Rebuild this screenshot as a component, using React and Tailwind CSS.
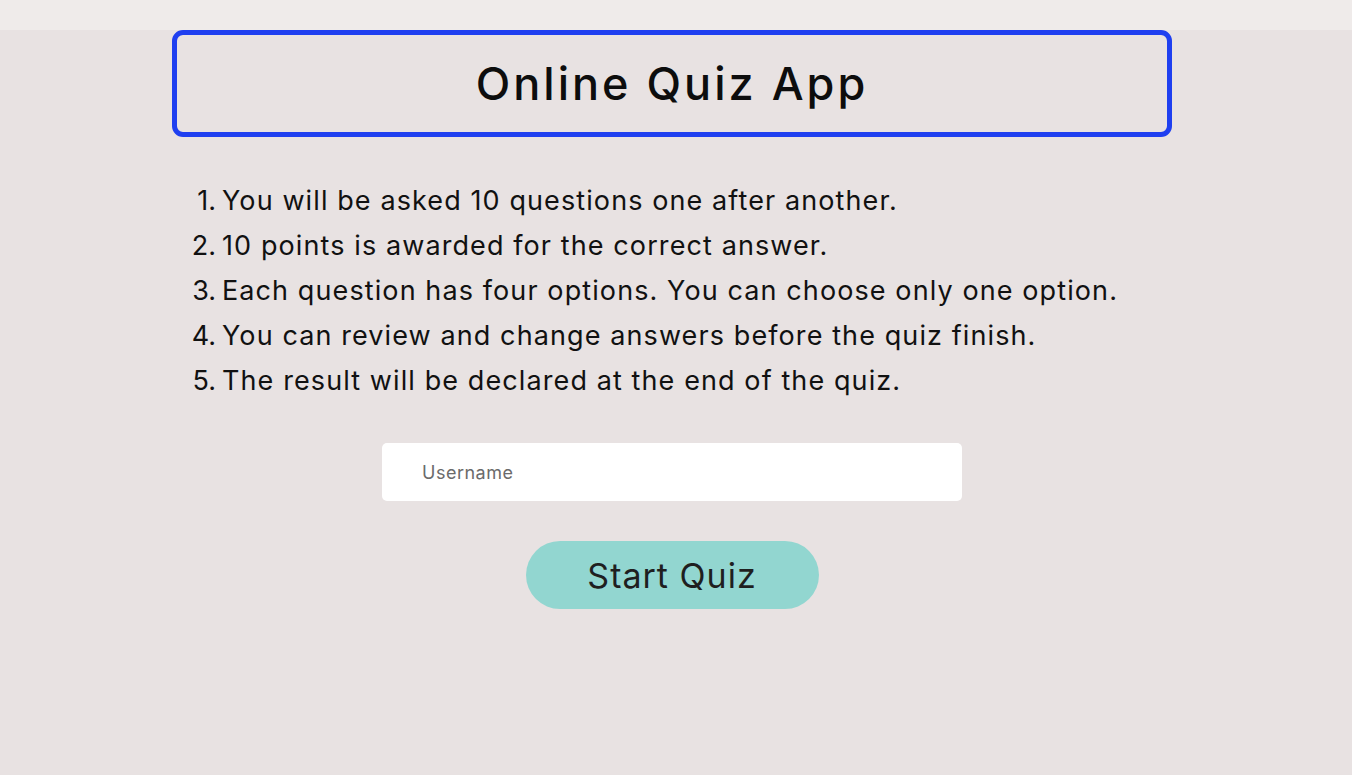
import React from 'react';

const rules = [
  'You will be asked 10 questions one after another.',
  '10 points is awarded for the correct answer.',
  'Each question has four options. You can choose only one option.',
  'You can review and change answers before the quiz finish.',
  'The result will be declared at the end of the quiz.',
];

const App = () => {
  return (
    <div className="min-h-[775px] bg-[#e8e2e2] text-[#111] font-['Inter',sans-serif]">
      <div className="h-[30px] bg-[#efebea]" />
      <div className="ml-[172px] w-[1000px]">
        <div className="h-[107px] border-[5px] border-[#1f3ff0] rounded-[11px] flex items-center justify-center">
          <h1 className="text-[45px] font-medium tracking-[3px] text-[#0d0d0d]">Online Quiz App</h1>
        </div>

        <ol className="mt-[41px] text-[27px] leading-[45px] tracking-[1.1px] text-[#111]">
          {rules.map((rule, i) => (
            <li key={rule} className="flex">
              <span className="w-[44px] text-right tracking-normal">{i + 1}.</span>
              <span className="ml-[6px]">{rule}</span>
            </li>
          ))}
        </ol>

        <div className="mt-[40px] flex justify-center">
          <input
            type="text"
            placeholder="Username"
            className="w-[580px] h-[58px] bg-white rounded-[5px] pl-[40px] text-[18px] tracking-[0.5px] outline-none placeholder:text-[#6b6b6b]"
          />
        </div>

        <div className="mt-[40px] flex justify-center">
          <button className="w-[293px] h-[68px] rounded-full bg-[#92d6d0] text-[34px] tracking-[1px] text-[#1f1f1f]">
            Start Quiz
          </button>
        </div>
      </div>
    </div>
  );
};

export default App;
